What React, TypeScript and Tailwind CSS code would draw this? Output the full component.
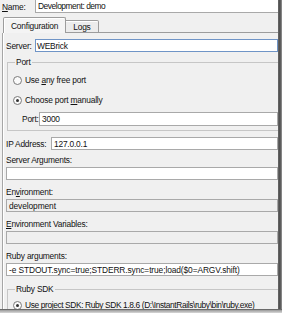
const labelFont = "font-['Liberation_Sans',Arial,sans-serif]";

function Radio({ checked }: { checked?: boolean }) {
	return (
		<span className="w-[9px] h-[9px] rounded-full border border-[#7b7b7b] bg-[#fafafa] grid place-items-center shrink-0">
			{checked && <span className="w-[3px] h-[3px] rounded-full bg-[#333]" />}
		</span>
	);
}

function Field({
	value,
	disabled,
	className = "",
}: {
	value?: string;
	disabled?: boolean;
	className?: string;
}) {
	return (
		<div
			className={`h-[13px] flex items-center border border-[#a9a9a9] whitespace-nowrap overflow-hidden pl-[2px] ${
				disabled ? "bg-[#efefef]" : "bg-white"
			} ${className}`}
		>
			{value}
		</div>
	);
}

function LabeledField({
	label,
	value,
	disabled,
	first,
}: {
	label: React.ReactNode;
	value?: string;
	disabled?: boolean;
	first?: boolean;
}) {
	return (
		<div className={`flex flex-col ${first ? "mt-[5px]" : "mt-[7px]"}`}>
			<div className="h-[10px] leading-[10px] mb-[2px]">{label}</div>
			<Field value={value} disabled={disabled} className="tracking-[-0.1px]" />
		</div>
	);
}

export default function App() {
	return (
		<div
			className={`w-[282px] h-[313px] overflow-hidden bg-[#f0f0f0] text-[8.4px] leading-[10px] tracking-[-0.2px] text-[#111] flex flex-col ${labelFont}`}
		>
			<div className="flex h-[309px]">
				<div className="w-[278px] flex flex-col overflow-hidden">
					{/* name */}
					<div className="flex items-center h-[13px] shrink-0">
						<span className="pl-[2px] w-[35px]">
							<u>N</u>ame:
						</span>
						<div className="flex-1 h-full bg-white border-l border-b border-[#a9a9a9] flex items-center pl-[2px] tracking-[-0.45px]">
							Development: demo
						</div>
					</div>

					{/* tabs */}
					<div className="flex items-end h-[16px] mt-[4px] pl-[3px] shrink-0">
						<div className="h-[16px] px-[7px] flex items-center border border-b-0 border-[#9c9c9c] bg-[#f4f4f4] rounded-t-[2px] shadow-[inset_1px_1px_0_#fff]">
							Configuration
						</div>
						<div className="h-[13px] px-[7px] flex items-center border border-l-0 border-[#9c9c9c] bg-[#ececec] rounded-tr-[2px] shadow-[inset_0_1px_0_#fff]">
							Logs
						</div>
						<div className="flex-1 border-b border-[#9c9c9c]" />
					</div>

					{/* panel */}
					<div className="flex-1 flex flex-col ml-[2px] border-l border-[#a6a6a6] pl-[3px] shadow-[inset_1px_0_0_#fff]">
						<div className="flex items-center h-[13px] mt-[6px] shrink-0">
							<span className="w-[29px]">Server:</span>
							<div className="flex-1 h-full bg-white border border-[#6f94c6] flex items-center pl-[1px]">
								WEBrick
							</div>
						</div>

						<fieldset className="mt-[5px] ml-[1px] border border-r-0 border-[#c6c6c6] pl-[5px] pb-[4px] shrink-0">
							<legend className="ml-[2px] px-[1px] h-[10px] leading-[10px]">Port</legend>
							<div className="flex items-center gap-[3px] h-[12px] mt-[7px]">
								<Radio />
								<span>
									Use <u>a</u>ny free port
								</span>
							</div>
							<div className="flex items-center gap-[3px] h-[12px] mt-[8px]">
								<Radio checked />
								<span>
									Choose port <u>m</u>anually
								</span>
							</div>
							<div className="flex items-center h-[14px] mt-[6px] pl-[9px]">
								<span className="w-[17px]">Port:</span>
								<Field value="3000" className="flex-1 h-[14px]" />
							</div>
						</fieldset>

						<div className="flex items-center h-[13px] mt-[6px] shrink-0">
							<span className="w-[45px]">IP Address:</span>
							<Field value="127.0.0.1" className="flex-1" />
						</div>

						<LabeledField label="Server Arguments:" first />
						<LabeledField
							label={
								<>
									En<u>v</u>ironment:
								</>
							}
							value="development"
							disabled
						/>
						<LabeledField
							label={
								<>
									<u>E</u>nvironment Variables:
								</>
							}
							disabled
						/>
						<LabeledField
							label="Ruby arguments:"
							value="-e STDOUT.sync=true;STDERR.sync=true;load($0=ARGV.shift)"
						/>

						<fieldset className="mt-[8px] ml-[1px] border border-r-0 border-[#c6c6c6] pl-[5px] pb-[4px] shrink-0">
							<legend className="ml-[2px] px-[1px] h-[10px] leading-[10px]">Ruby SDK</legend>
							<div className="flex items-center gap-[3px] h-[10px] mt-[6px] whitespace-nowrap">
								<Radio checked />
								<span className="tracking-[-0.38px]">
									Use project SDK: Ruby SDK 1.8.6 (D:\InstantRails\ruby\bin\ruby.exe)
								</span>
							</div>
						</fieldset>
					</div>
				</div>
				{/* right window shadow */}
				<div className="w-[4px] bg-gradient-to-r from-[#6a6a6a] via-[#4a4a4a] to-[#9a9a9a]" />
			</div>
			{/* bottom window shadow */}
			<div className="h-[1px] bg-[#6a6a6a]" />
			<div className="flex-1 bg-gradient-to-b from-[#9a9a9a] to-[#d8d8d8]" />
		</div>
	);
}
